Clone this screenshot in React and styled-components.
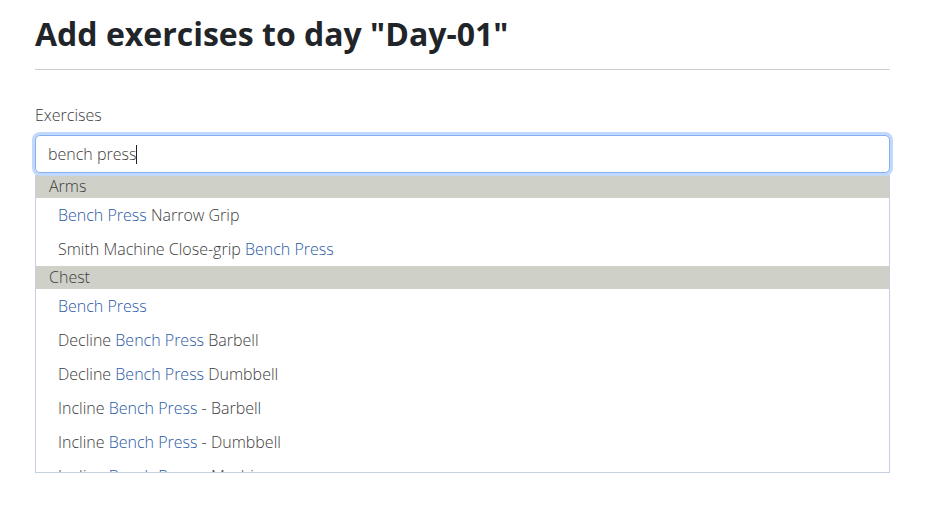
import styled, { createGlobalStyle } from "styled-components";

const groups = [
  {
    name: "Arms",
    items: [
      ["", "Bench Press", " Narrow Grip"],
      ["Smith Machine Close-grip ", "Bench Press", ""],
    ],
  },
  {
    name: "Chest",
    items: [
      ["", "Bench Press", ""],
      ["Decline ", "Bench Press", " Barbell"],
      ["Decline ", "Bench Press", " Dumbbell"],
      ["Incline ", "Bench Press", " - Barbell"],
      ["Incline ", "Bench Press", " - Dumbbell"],
      ["Incline ", "Bench Press", " - Machine"],
    ],
  },
];

function App() {
  return (
    <>
      <GlobalStyle />
      <StPage>
        <StTitle>Add exercises to day "Day-01"</StTitle>
        <StRule />
        <StLabel htmlFor="exercise-search">Exercises</StLabel>
        <StInputWrap>
          <StInput id="exercise-search" defaultValue="bench press" />
          <StCaret />
        </StInputWrap>
        <StMenu>
          {groups.map((group) => (
            <div key={group.name}>
              <StGroupHeader>{group.name}</StGroupHeader>
              {group.items.map(([before, match, after]) => (
                <StOption key={before + match + after}>
                  {before}
                  <StMatch>{match}</StMatch>
                  {after}
                </StOption>
              ))}
            </div>
          ))}
        </StMenu>
      </StPage>
    </>
  );
}

export default App;

const GlobalStyle = createGlobalStyle`
  body {
    margin: 0;
    background: #fff;
    font-family: "Open Sans", "Liberation Sans", sans-serif;
    font-weight: 300;
    color: #212529;
  }
`;

const StPage = styled.div`
  width: 855px;
  padding: 15px 0 0 35px;
`;

const StTitle = styled.h2`
  margin: 0;
  font-size: 32px;
  font-weight: 700;
  line-height: 1.2;
  color: #212529;
`;

const StRule = styled.hr`
  margin: 16px 0 0;
  border: 0;
  border-top: 1px solid #cfcfcf;
`;

const StLabel = styled.label`
  display: block;
  margin-top: 34px;
  font-size: 16px;
  line-height: 22px;
  color: #3c3c3c;
`;

const StInputWrap = styled.div`
  position: relative;
  margin-top: 9px;
`;

const StInput = styled.input`
  box-sizing: border-box;
  width: 100%;
  height: 38px;
  padding: 0 12px;
  border: 1px solid #86b0f5;
  border-radius: 5px;
  box-shadow: 0 0 0 3px #c3d9fb;
  outline: none;
  font-family: inherit;
  font-weight: 300;
  font-size: 16px;
  color: #3c3c3c;
`;

const StCaret = styled.span`
  position: absolute;
  left: 101px;
  top: 10px;
  width: 1px;
  height: 19px;
  background: #222;
`;

const StMenu = styled.div`
  box-sizing: border-box;
  height: 298px;
  overflow: hidden;
  border: 1px solid #c5cfe0;
  border-top: 0;
  margin-top: 2px;
`;

const StGroupHeader = styled.div`
  height: 23px;
  padding-left: 13px;
  background: #cfd1c9;
  font-size: 16px;
  line-height: 23px;
  color: #3c3c3c;
`;

const StOption = styled.div`
  height: 34px;
  padding-left: 22px;
  font-size: 16px;
  line-height: 34px;
  color: #3c3c3c;
  white-space: nowrap;
`;

const StMatch = styled.span`
  color: #2a5aa6;
`;
